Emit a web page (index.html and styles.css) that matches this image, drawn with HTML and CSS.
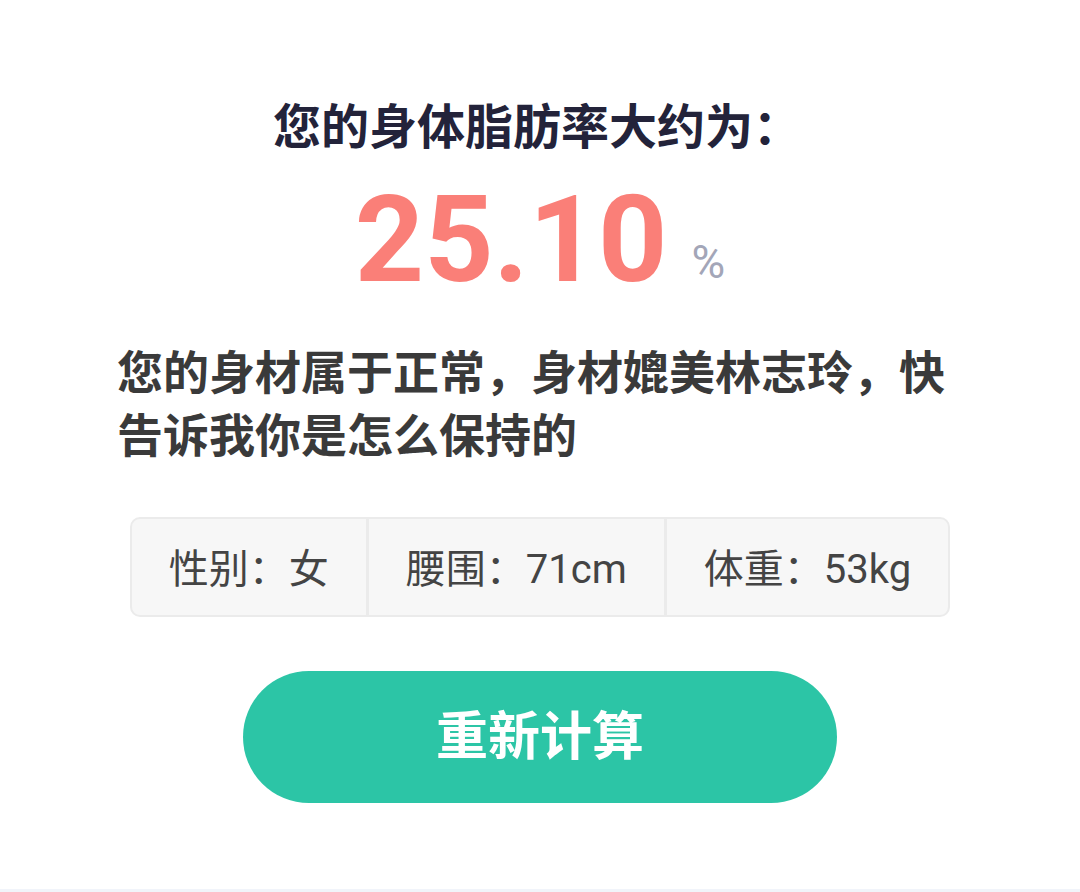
FILE: index.html
```html
<!DOCTYPE html>
<html lang="zh-CN">
<head>
<meta charset="utf-8">
<title>体脂率结果</title>
<link rel="stylesheet" href="styles.css">
</head>
<body>
<div class="page">
  <h1 class="title">您的身体脂肪率大约为：</h1>
  <div class="result">
    <span class="value">25.10</span>
    <span class="unit">%</span>
  </div>
  <p class="desc">您的身材属于正常，身材媲美林志玲，快告诉我你是怎么保持的</p>
  <div class="info">
    <div class="cell">性别：女</div>
    <div class="cell">腰围：71cm</div>
    <div class="cell">体重：53kg</div>
  </div>
  <div class="actions">
    <button class="btn">重新计算</button>
  </div>
</div>
</body>
</html>
```

FILE: styles.css
```css
html, body {
  margin: 0;
  padding: 0;
  background: #ffffff;
}

body {
  font-family: Roboto, "Noto Sans CJK SC", sans-serif;
}

.page {
  height: 889px;
  border-bottom: 3px solid #f1f4fa;
  display: flex;
  flex-direction: column;
  align-items: center;
}

.title {
  margin: 90px 0 0;
  padding-right: 6px;
  font-size: 48px;
  line-height: 66px;
  font-weight: 700;
  color: #23233a;
  text-align: center;
  font-family: "Noto Sans CJK SC", sans-serif;
}

.result {
  display: flex;
  align-items: baseline;
  margin-top: 19px;
  height: 130px;
}

.value {
  font-family: Roboto, sans-serif;
  font-size: 121px;
  font-weight: 700;
  color: #fa7f78;
  line-height: 130px;
}

.unit {
  font-family: Roboto, sans-serif;
  font-size: 46px;
  color: #a3a6b8;
  margin-left: 24px;
  position: relative;
  top: -3px;
}

.desc {
  align-self: flex-start;
  margin: 33px 0 0 117px;
  width: 840px;
  font-family: "Noto Sans CJK SC", sans-serif;
  font-size: 46px;
  line-height: 63px;
  font-weight: 700;
  color: #3a3a3a;
}

.info {
  display: flex;
  margin-top: 53px;
  background: #f7f7f7;
  border: 2px solid #ebebeb;
  border-radius: 10px;
  overflow: hidden;
}

.cell {
  height: 96px;
  padding: 0 37px 2px;
  box-sizing: border-box;
  height: 96px;
  display: flex;
  align-items: center;
  font-family: Roboto, "Noto Sans CJK SC", sans-serif;
  font-size: 40px;
  color: #444444;
}

.cell + .cell {
  border-left: 3px solid #ebebeb;
}

.actions {
  margin-top: 54px;
}

.btn {
  width: 594px;
  height: 132px;
  border: none;
  border-radius: 66px;
  background: #2cc5a6;
  color: #ffffff;
  font-family: "Noto Sans CJK SC", sans-serif;
  font-size: 52px;
  font-weight: 700;
  padding: 0 0 10px;
}
```
